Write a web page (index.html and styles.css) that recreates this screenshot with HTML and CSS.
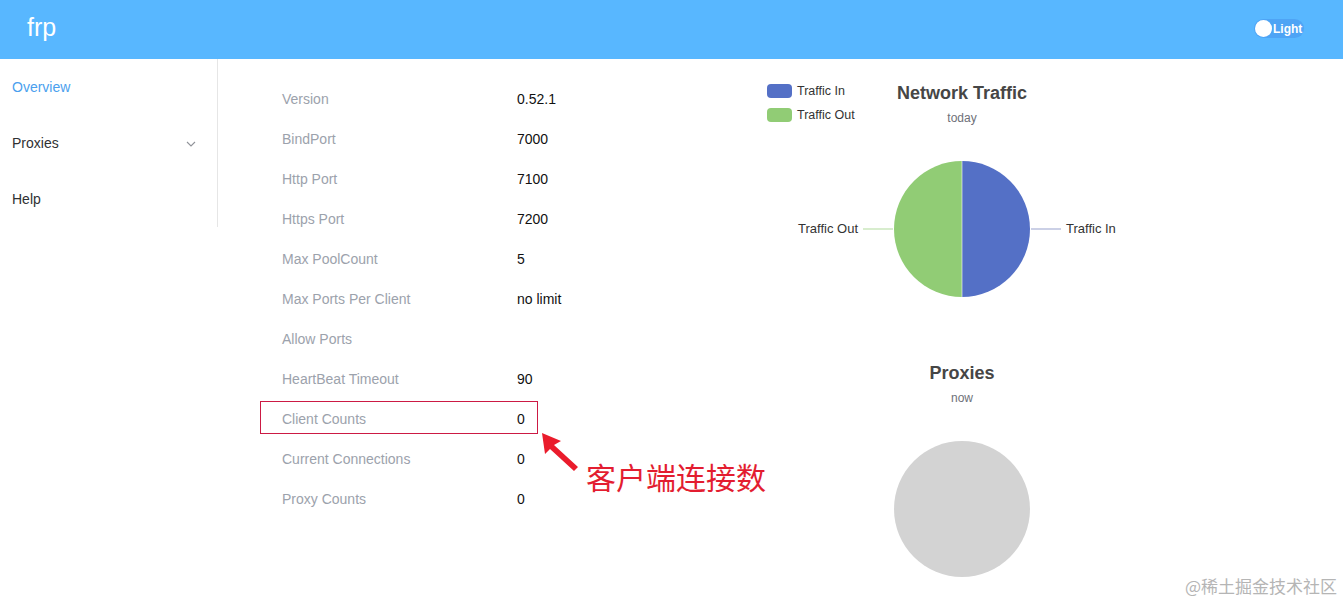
FILE: index.html
```html
<!DOCTYPE html>
<html lang="en">
<head>
<meta charset="utf-8">
<title>frp</title>
<link rel="stylesheet" href="styles.css">
</head>
<body>
<div class="page">
  <header class="topbar">
    <div class="brand">frp</div>
    <div class="theme-toggle">
      <span class="knob"></span>
      <span class="toggle-label">Light</span>
    </div>
  </header>
  <div class="main">
    <aside class="sidebar">
      <div class="menu-item active">Overview</div>
      <div class="menu-item has-sub">
        <span>Proxies</span>
        <svg class="chevron" width="10" height="6" viewBox="0 0 10 6"><path d="M1 1 L5 5 L9 1" fill="none" stroke="#909399" stroke-width="1.1"/></svg>
      </div>
      <div class="menu-item">Help</div>
    </aside>
    <section class="content">
      <div class="info">
        <div class="row"><span class="label">Version</span><span class="value">0.52.1</span></div>
        <div class="row"><span class="label">BindPort</span><span class="value">7000</span></div>
        <div class="row"><span class="label">Http Port</span><span class="value">7100</span></div>
        <div class="row"><span class="label">Https Port</span><span class="value">7200</span></div>
        <div class="row"><span class="label">Max PoolCount</span><span class="value">5</span></div>
        <div class="row"><span class="label">Max Ports Per Client</span><span class="value">no limit</span></div>
        <div class="row"><span class="label">Allow Ports</span><span class="value"></span></div>
        <div class="row"><span class="label">HeartBeat Timeout</span><span class="value">90</span></div>
        <div class="row"><span class="label">Client Counts</span><span class="value">0</span></div>
        <div class="row"><span class="label">Current Connections</span><span class="value">0</span></div>
        <div class="row"><span class="label">Proxy Counts</span><span class="value">0</span></div>
      </div>
      <div class="charts">
        <svg class="chart chart-traffic" width="420" height="280" viewBox="0 0 420 280">
          <rect x="15" y="16" width="25" height="14" rx="4" fill="#5470c6"/>
          <text x="45" y="27" class="legend-text">Traffic In</text>
          <rect x="15" y="40" width="25" height="14" rx="4" fill="#91cc75"/>
          <text x="45" y="51" class="legend-text">Traffic Out</text>
          <text x="210" y="31" text-anchor="middle" class="chart-title">Network Traffic</text>
          <text x="210" y="54" text-anchor="middle" class="chart-sub">today</text>
          <path d="M210 93 A68 68 0 0 1 210 229 Z" fill="#5470c6"/>
          <path d="M210 229 A68 68 0 0 1 210 93 Z" fill="#91cc75"/>
          <line x1="210" y1="93" x2="210" y2="229" stroke="#ffffff" stroke-width="0.6"/>
          <line x1="279" y1="161" x2="309" y2="161" stroke="#a9b1d6" stroke-width="1.2"/>
          <line x1="111" y1="161" x2="141" y2="161" stroke="#bfe2ad" stroke-width="1.2"/>
          <text x="314" y="165" class="pie-label">Traffic In</text>
          <text x="106" y="165" text-anchor="end" class="pie-label">Traffic Out</text>
        </svg>
        <svg class="chart chart-proxies" width="420" height="255" viewBox="0 0 420 255">
          <text x="210" y="31" text-anchor="middle" class="chart-title">Proxies</text>
          <text x="210" y="54" text-anchor="middle" class="chart-sub">now</text>
          <circle cx="210" cy="161" r="68" fill="#d3d3d3"/>
        </svg>
      </div>
    </section>
  </div>

  <div class="highlight-box"></div>
  <svg class="arrow" width="50" height="50" viewBox="0 0 50 50">
    <polygon points="2,2 5,23 10,18 34,40 38,36 14,14 21,10" fill="#ea1c2c"/>
  </svg>
  <div class="annotation">客户端连接数</div>
  <div class="watermark">@稀土掘金技术社区</div>
</div>
</body>
</html>
```

FILE: styles.css
```css
* { box-sizing: border-box; }
html, body {
  margin: 0;
  padding: 0;
  background: #ffffff;
}
body {
  font-family: "Liberation Sans", Arial, "Noto Sans CJK SC", sans-serif;
  color: #303133;
}
.page {
  position: relative;
  width: 1343px;
  height: 603px;
  overflow: hidden;
}
.topbar {
  height: 59px;
  background: #58b7ff;
  display: flex;
  align-items: center;
  justify-content: space-between;
  padding: 0 39px 0 27px;
}
.brand {
  color: #ffffff;
  font-size: 25px;
  line-height: 1;
  margin-top: -4px;
}
.theme-toggle {
  display: flex;
  align-items: center;
  height: 19px;
  width: 50px;
  border-radius: 10px;
  background: #4ea4f5;
  margin-top: -2px;
}
.knob {
  width: 17px;
  height: 17px;
  border-radius: 50%;
  background: #ffffff;
  margin-left: 1px;
}
.toggle-label {
  color: #ffffff;
  font-size: 12px;
  font-weight: bold;
  margin-left: 1px;
}
.main {
  display: flex;
  align-items: flex-start;
}
.sidebar {
  width: 218px;
  flex: none;
  border-right: 1px solid #e6e6e6;
}
.menu-item {
  height: 56px;
  display: flex;
  align-items: center;
  justify-content: space-between;
  padding: 0 21px 0 12px;
  font-size: 14px;
  color: #303133;
}
.menu-item.active { color: #4b9fee; }
.chevron { margin-top: 1px; }
.content {
  flex: 1;
  display: flex;
}
.info {
  width: 534px;
  flex: none;
  padding: 20px 0 0 64px;
}
.row {
  height: 40px;
  display: flex;
  align-items: center;
  font-size: 14px;
}
.label {
  width: 235px;
  color: #9ca2ac;
}
.value { color: #111111; }
.charts {
  display: flex;
  flex-direction: column;
  padding-top: 9px;
}
.chart { display: block; }
.legend-text {
  font-family: "Liberation Sans", Arial, sans-serif;
  font-size: 12.5px;
  fill: #333333;
}
.chart-title {
  font-family: "Liberation Sans", Arial, sans-serif;
  font-size: 18px;
  font-weight: bold;
  fill: #464646;
}
.chart-sub {
  font-family: "Liberation Sans", Arial, sans-serif;
  font-size: 12px;
  fill: #6e7079;
}
.pie-label {
  font-family: "Liberation Sans", Arial, sans-serif;
  font-size: 13px;
  fill: #333333;
}
.highlight-box {
  position: absolute;
  left: 260px;
  top: 401px;
  width: 278px;
  height: 33px;
  border: 1px solid #cc1a44;
}
.arrow {
  position: absolute;
  left: 540px;
  top: 431px;
}
.annotation {
  position: absolute;
  left: 586px;
  top: 458px;
  font-family: "Noto Sans CJK SC", sans-serif;
  font-size: 30px;
  line-height: 36px;
  color: #e31d30;
}
.watermark {
  position: absolute;
  right: 6px;
  top: 576px;
  font-family: "Noto Sans CJK SC", sans-serif;
  font-size: 17px;
  line-height: 20px;
  color: #b5b5b5;
}
```
